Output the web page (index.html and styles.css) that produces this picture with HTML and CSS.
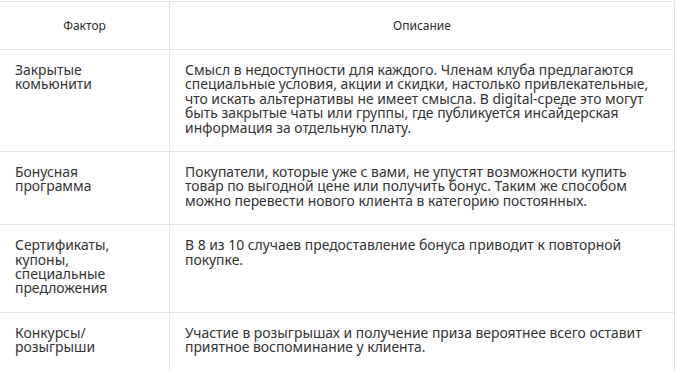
FILE: index.html
```html
<!DOCTYPE html>
<html lang="ru">
<head>
<meta charset="utf-8">
<title>Факторы</title>
<link rel="stylesheet" href="styles.css">
</head>
<body>
<div class="wrap">
<table class="factors">
<colgroup><col class="c-factor"><col class="c-desc"></colgroup>
<thead>
<tr><th>Фактор</th><th>Описание</th></tr>
</thead>
<tbody>
<tr>
<td class="name">Закрытые комьюнити</td>
<td>Смысл в недоступности для каждого. Членам клуба предлагаются специальные условия, акции и скидки, настолько привлекательные, что искать альтернативы не имеет смысла. В digital-среде это могут быть закрытые чаты или группы, где публикуется инсайдерская информация за отдельную плату.</td>
</tr>
<tr>
<td class="name">Бонусная программа</td>
<td>Покупатели, которые уже с вами, не упустят возможности купить товар по выгодной цене или получить бонус. Таким же способом можно перевести нового клиента в категорию постоянных.</td>
</tr>
<tr>
<td class="name">Сертификаты, купоны, специальные предложения</td>
<td>В 8 из 10 случаев предоставление бонуса приводит к повторной покупке.</td>
</tr>
<tr>
<td class="name">Конкурсы/ розыгрыши</td>
<td>Участие в розыгрышах и получение приза вероятнее всего оставит приятное воспоминание у клиента.</td>
</tr>
</tbody>
</table>
</div>
</body>
</html>
```
FILE: styles.css
```css
html, body {
  margin: 0;
  padding: 0;
  background: #fff;
}
.wrap {
  padding-top: 1px;
  overflow: hidden;
}
.factors {
  border-collapse: collapse;
  table-layout: fixed;
  width: 676px;
  margin-left: -1px;
  font-family: "Noto Sans", "Open Sans", sans-serif;
  color: #333;
}
.c-factor { width: 170px; }
.factors th,
.factors td {
  border: 1px solid #e4e4e4;
  vertical-align: top;
  text-align: left;
}
.factors th {
  font-weight: normal;
  font-size: 12px;
  line-height: 15px;
  padding: 16px 10px;
  text-align: center;
  color: #2b2b2b;
}
.factors td {
  font-size: 13.9px;
  line-height: 14.4px;
  padding: 13px 10px 16px 15px;
}
.factors td.name {
  padding-right: 15px;
}
```
